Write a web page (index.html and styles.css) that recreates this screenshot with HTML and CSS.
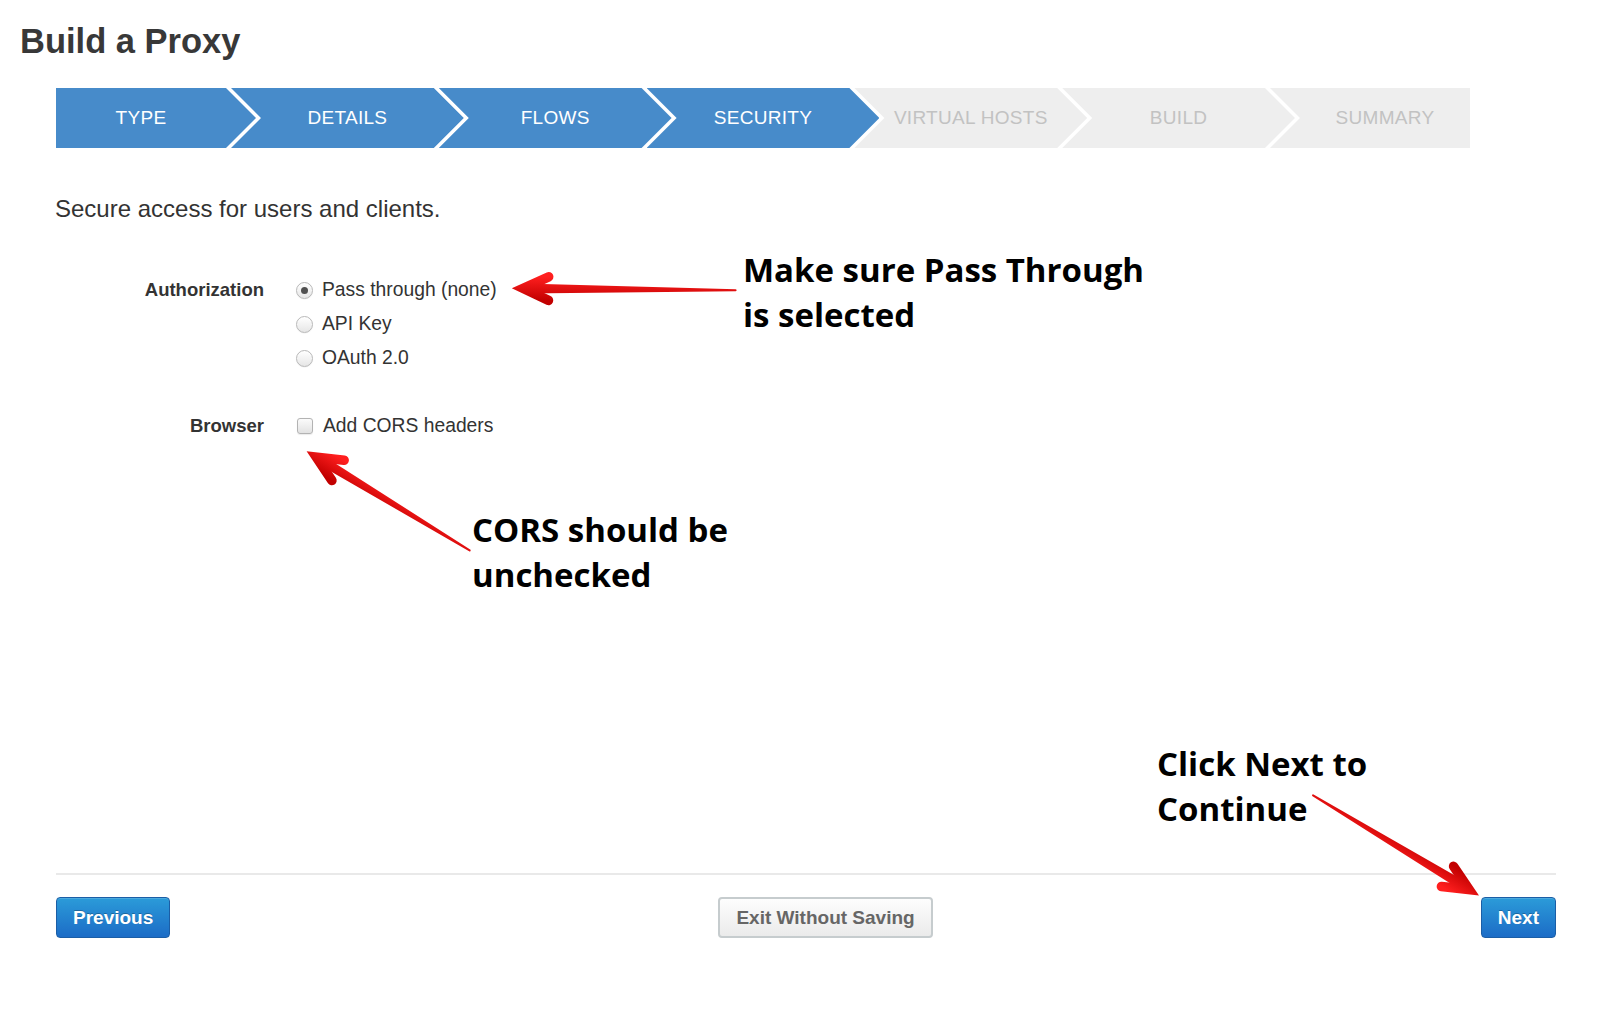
FILE: index.html
```html
<!DOCTYPE html>
<html lang="en">
<head>
<meta charset="utf-8">
<title>Build a Proxy</title>
<link rel="stylesheet" href="styles.css">
</head>
<body>
<div class="page">
  <h1 class="title">Build a Proxy</h1>
  <ol class="wizard">
    <li class="step step-first done">TYPE</li>
    <li class="step done">DETAILS</li>
    <li class="step done">FLOWS</li>
    <li class="step done">SECURITY</li>
    <li class="step">VIRTUAL HOSTS</li>
    <li class="step">BUILD</li>
    <li class="step step-last">SUMMARY</li>
  </ol>
  <p class="intro">Secure access for users and clients.</p>
  <div class="form">
    <div class="form-row">
      <div class="form-label">Authorization</div>
      <div class="form-controls">
        <label class="option"><input type="radio" class="radio" name="auth" checked>Pass through (none)</label>
        <label class="option"><input type="radio" class="radio" name="auth">API Key</label>
        <label class="option"><input type="radio" class="radio" name="auth">OAuth 2.0</label>
      </div>
    </div>
    <div class="form-row row-browser">
      <div class="form-label">Browser</div>
      <div class="form-controls">
        <label class="option"><input type="checkbox" class="checkbox">Add CORS headers</label>
      </div>
    </div>
  </div>
  <div class="footer">
    <div class="footer-rule"></div>
    <div class="footer-actions">
      <button class="btn btn-primary" type="button">Previous</button>
      <button class="btn btn-default" type="button">Exit Without Saving</button>
      <button class="btn btn-primary" type="button">Next</button>
    </div>
  </div>
</div>

<div class="note note-pass">Make sure Pass Through<br>is selected</div>
<div class="note note-cors">CORS should be<br>unchecked</div>
<div class="note note-next">Click Next to<br>Continue</div>

<svg class="arrows" width="1602" height="1018" viewBox="0 0 1602 1018" aria-hidden="true">
  <defs>
    <linearGradient id="redGrad" gradientUnits="userSpaceOnUse" x1="0" y1="-12" x2="0" y2="12">
      <stop offset="0" stop-color="#ff1f1f"/>
      <stop offset="1" stop-color="#c20000"/>
    </linearGradient>
  </defs>
  <g transform="translate(512.6 288.3) rotate(0.5)">
    <path class="arrow-shaft" d="M12 -5 L223 -1 A1 1 0 0 1 223 1 L12 5 Z"/>
    <polyline class="arrow-head" points="36,-11.8 10.5,0 36,11.8"/>
  </g>
  <g transform="translate(307.3 451.7) rotate(31.3)">
    <path class="arrow-shaft" d="M12 -5 L190 -1 A1 1 0 0 1 190 1 L12 5 Z"/>
    <polyline class="arrow-head" points="36,-11.8 10.5,0 36,11.8"/>
  </g>
  <g transform="translate(1478.3 895) rotate(211.1)">
    <path class="arrow-shaft" d="M12 -5 L193 -1 A1 1 0 0 1 193 1 L12 5 Z"/>
    <polyline class="arrow-head" points="36,-11.8 10.5,0 36,11.8"/>
  </g>
</svg>
</body>
</html>
```

FILE: styles.css
```css
html, body {
  margin: 0;
  padding: 0;
  background: #ffffff;
}

body {
  position: relative;
  width: 1602px;
  height: 1018px;
  overflow: hidden;
  font-family: "Liberation Sans", Arial, Helvetica, sans-serif;
  color: #333333;
}

.page {
  padding-top: 21px;
}

.title {
  margin: 0 0 0 20px;
  font-size: 34.5px;
  line-height: 40px;
  font-weight: 700;
  color: #383838;
}

/* ---------- wizard ---------- */
.wizard {
  display: flex;
  list-style: none;
  margin: 27px 0 0 56px;
  padding: 0;
  width: 1414px;
  height: 60px;
}

.step {
  flex: 1 1 0;
  box-sizing: border-box;
  height: 60px;
  line-height: 60px;
  margin-left: -25px;
  background: #eeeeee;
  color: #c2c2c2;
  font-size: 19px;
  letter-spacing: 0.3px;
  text-align: center;
  white-space: nowrap;
  clip-path: polygon(0 0, calc(100% - 30px) 0, 100% 50%, calc(100% - 30px) 100%, 0 100%, 30px 50%);
}

.step-first {
  flex: 0 0 200px;
  margin-left: 0;
  padding-right: 30px;
  clip-path: polygon(0 0, calc(100% - 30px) 0, 100% 50%, calc(100% - 30px) 100%, 0 100%);
}

.step-last {
  flex: 0 0 200px;
  padding-left: 30px;
  clip-path: polygon(0 0, 100% 0, 100% 100%, 0 100%, 30px 50%);
}

.step.done {
  background: #478bca;
  color: #ffffff;
}

/* ---------- intro ---------- */
.intro {
  margin: 47px 0 0 55px;
  font-size: 24px;
  line-height: 28px;
  color: #333333;
}

/* ---------- form ---------- */
.form {
  margin: 50px 0 0 56px;
}

.form-row {
  display: flex;
}

.row-browser {
  margin-top: 34px;
}

.form-label {
  width: 208px;
  margin-right: 32px;
  text-align: right;
  font-size: 18.5px;
  font-weight: 700;
  line-height: 34px;
  color: #333333;
}

.form-controls {
  display: flex;
  flex-direction: column;
}

.option {
  display: flex;
  align-items: center;
  height: 34px;
  font-size: 19.3px;
  color: #333333;
}

.radio {
  appearance: none;
  -webkit-appearance: none;
  box-sizing: border-box;
  width: 17px;
  height: 17px;
  margin: 0 9px 0 0;
  border-radius: 50%;
  border: 1px solid #b9b9b9;
  background: linear-gradient(#ffffff, #e6e6e6);
  box-shadow: inset 0 1px 1px rgba(255,255,255,0.8), 0 0.5px 1px rgba(0,0,0,0.08);
  display: flex;
  align-items: center;
  justify-content: center;
}

.radio:checked::after {
  content: "";
  width: 7px;
  height: 7px;
  border-radius: 50%;
  background: #505050;
}

.checkbox {
  appearance: none;
  -webkit-appearance: none;
  box-sizing: border-box;
  width: 16px;
  height: 16px;
  margin: 0 10px 0 1px;
  border-radius: 3px;
  border: 1px solid #b3b3b3;
  background: linear-gradient(#fbfbfb, #e2e2e2);
  box-shadow: 0 0.5px 1px rgba(0,0,0,0.08);
}

/* ---------- footer ---------- */
.footer {
  margin: 430px 0 0 56px;
  width: 1500px;
}

.footer-rule {
  height: 2px;
  background: #e9e9e9;
}

.footer-actions {
  display: flex;
  justify-content: space-between;
  margin-top: 22px;
}

.btn {
  box-sizing: border-box;
  height: 41px;
  padding: 0 16px;
  border-radius: 4px;
  font-family: "Liberation Sans", Arial, Helvetica, sans-serif;
  font-size: 19px;
  font-weight: 700;
  cursor: pointer;
}

.btn-primary {
  border: 1px solid #1b5ea6;
  background: linear-gradient(#2b9bd9, #1c6cc6);
  color: #ffffff;
  text-shadow: 0 -1px 0 rgba(0,0,0,0.25);
  box-shadow: inset 0 1px 0 rgba(255,255,255,0.15);
}

.btn-default {
  border: 2px solid #c6ccce;
  background: linear-gradient(#fdfdfd, #ebebeb);
  color: #666666;
  padding: 0 16px;
}

/* ---------- annotations ---------- */
.note {
  position: absolute;
  font-family: "Open Sans", "Noto Sans", sans-serif;
  font-weight: 700;
  font-size: 33px;
  line-height: 45px;
  color: #000000;
  white-space: nowrap;
}

.note-pass {
  left: 743px;
  top: 247px;
}

.note-cors {
  left: 472px;
  top: 507px;
}

.note-next {
  left: 1157px;
  top: 741px;
}

.arrows {
  position: absolute;
  left: 0;
  top: 0;
  pointer-events: none;
}

.arrow-shaft {
  fill: url(#redGrad);
}

.arrow-head {
  fill: none;
  stroke: url(#redGrad);
  stroke-width: 9.5;
  stroke-linecap: round;
  stroke-linejoin: miter;
  stroke-miterlimit: 6;
}
```
